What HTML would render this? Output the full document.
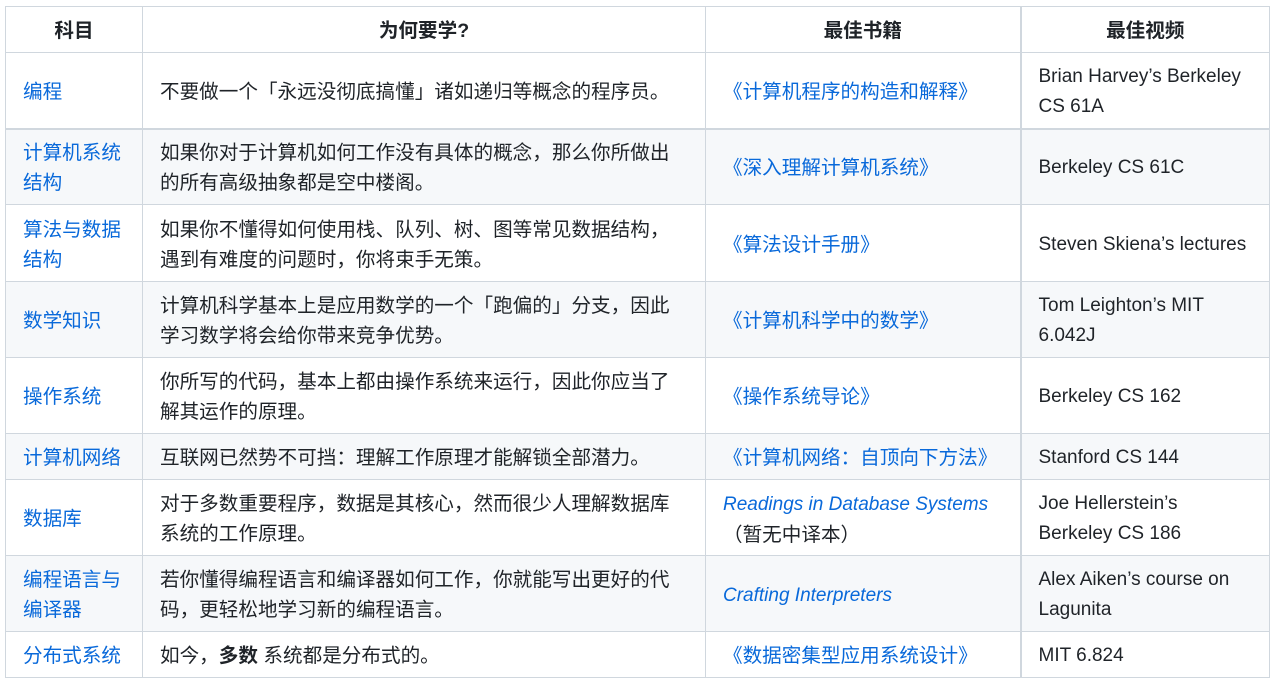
<!DOCTYPE html>
<html><head><meta charset="utf-8"><style>
body{margin:0;background:#fff;font-family:"Liberation Sans","Noto Sans CJK SC",sans-serif;color:#1f2328;font-size:19.6px;}
table{position:absolute;left:5px;top:6px;border-collapse:collapse;table-layout:fixed;width:1264px;}
td,th{border:1px solid #d0d7de;padding:3px 17px 0;line-height:30px;vertical-align:middle;text-align:left;white-space:nowrap;overflow:hidden;}
th{text-align:center;font-weight:bold;height:42px;}
tr:nth-child(odd) td{background:#f6f8fa;}
a{color:#0969da;text-decoration:none;}
.c4{border-left:2px solid #d0d7de;}
.r1 td{border-bottom:2px solid #d0d7de;}
.en{font-size:19px;}
</style></head><body>
<table>
<colgroup><col style="width:137px"><col style="width:563px"><col style="width:315px"><col style="width:249px"></colgroup>
<tr><th>科目</th><th>为何要学?</th><th>最佳书籍</th><th class="c4">最佳视频</th></tr>
<tr class="r1" style="height:76px"><td><a>编程</a></td><td>不要做一个「永远没彻底搞懂」诸如递归等概念的程序员。</td><td><a>《计算机程序的构造和解释》</a></td><td class="c4 en">Brian Harvey’s Berkeley<br>CS 61A</td></tr>
<tr style="height:76px"><td><a>计算机系统<br>结构</a></td><td>如果你对于计算机如何工作没有具体的概念，那么你所做出<br>的所有高级抽象都是空中楼阁。</td><td><a>《深入理解计算机系统》</a></td><td class="c4 en">Berkeley CS 61C</td></tr>
<tr style="height:77px"><td><a>算法与数据<br>结构</a></td><td>如果你不懂得如何使用栈、队列、树、图等常见数据结构，<br>遇到有难度的问题时，你将束手无策。</td><td><a>《算法设计手册》</a></td><td class="c4 en">Steven Skiena’s lectures</td></tr>
<tr style="height:76px"><td><a>数学知识</a></td><td>计算机科学基本上是应用数学的一个「跑偏的」分支，因此<br>学习数学将会给你带来竞争优势。</td><td><a>《计算机科学中的数学》</a></td><td class="c4 en">Tom Leighton’s MIT<br>6.042J</td></tr>
<tr style="height:76px"><td><a>操作系统</a></td><td>你所写的代码，基本上都由操作系统来运行，因此你应当了<br>解其运作的原理。</td><td><a>《操作系统导论》</a></td><td class="c4 en">Berkeley CS 162</td></tr>
<tr style="height:46px"><td><a>计算机网络</a></td><td>互联网已然势不可挡：理解工作原理才能解锁全部潜力。</td><td><a>《计算机网络：自顶向下方法》</a></td><td class="c4 en">Stanford CS 144</td></tr>
<tr style="height:76px"><td><a>数据库</a></td><td>对于多数重要程序，数据是其核心，然而很少人理解数据库<br>系统的工作原理。</td><td><a class="en"><i>Readings in Database Systems</i></a><br>（暂无中译本）</td><td class="c4 en">Joe Hellerstein’s<br>Berkeley CS 186</td></tr>
<tr style="height:76px"><td><a>编程语言与<br>编译器</a></td><td>若你懂得编程语言和编译器如何工作，你就能写出更好的代<br>码，更轻松地学习新的编程语言。</td><td><a class="en"><i>Crafting Interpreters</i></a></td><td class="c4 en">Alex Aiken’s course on<br>Lagunita</td></tr>
<tr style="height:46px"><td><a>分布式系统</a></td><td>如今，<b>多数</b> 系统都是分布式的。</td><td><a>《数据密集型应用系统设计》</a></td><td class="c4 en">MIT 6.824</td></tr>
</table>
</body></html>
